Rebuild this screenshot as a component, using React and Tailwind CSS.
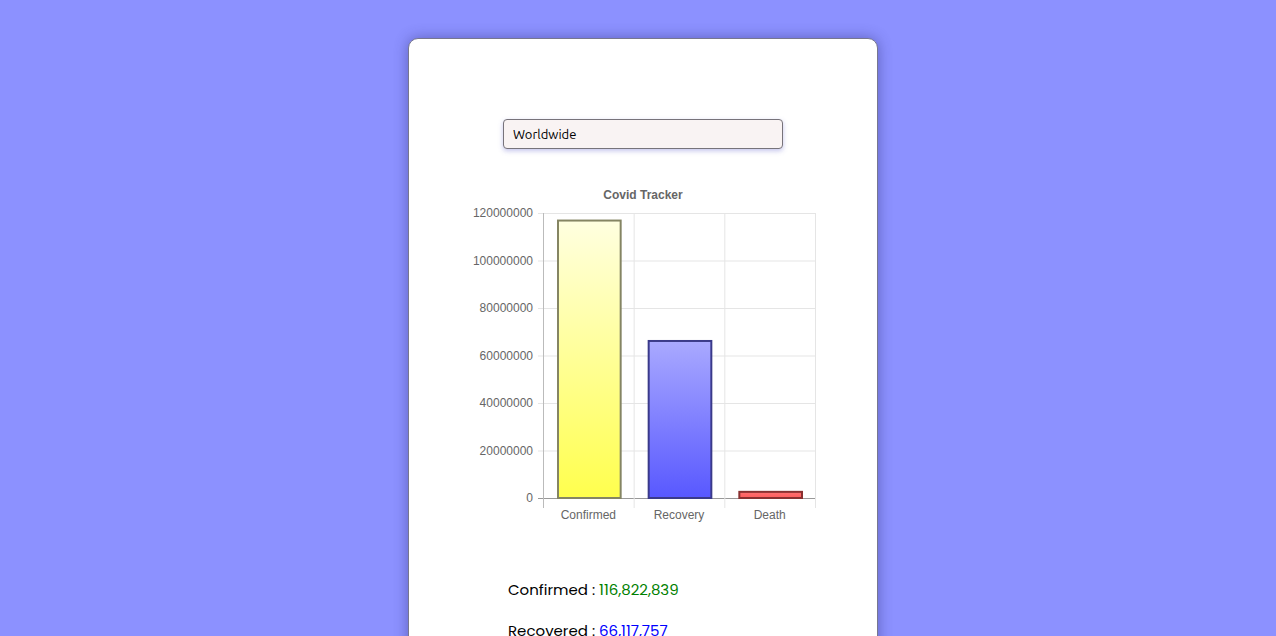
import { useState } from 'react'

const stats = { confirmed: 116822839, recovered: 66117757, deaths: 2592066 }

const yTicks = [0, 20000000, 40000000, 60000000, 80000000, 100000000, 120000000]

function Chart({ data }) {
  // plot area in svg coords
  const left = 134
  const right = 406
  const top = 33
  const bottom = 318
  const h = bottom - top
  const colW = (right - left) / 3
  const y = (v) => bottom - (v / 120000000) * h
  const bars = [
    { label: 'Confirmed', value: data.confirmed, grad: 'gY', stroke: '#858563' },
    { label: 'Recovery', value: data.recovered, grad: 'gB', stroke: '#3a3a8a' },
    { label: 'Death', value: data.deaths, grad: 'gR', stroke: '#8a3030' },
  ]
  return (
    <svg width="468" height="345" className="block" style={{ fontFamily: '"Liberation Sans", Arial, sans-serif' }}>
      <defs>
        <linearGradient id="gY" x1="0" y1="0" x2="0" y2="1">
          <stop offset="0" stopColor="#ffffe0" />
          <stop offset="1" stopColor="#ffff4d" />
        </linearGradient>
        <linearGradient id="gB" x1="0" y1="0" x2="0" y2="1">
          <stop offset="0" stopColor="#a9a9ff" />
          <stop offset="1" stopColor="#5858ff" />
        </linearGradient>
        <linearGradient id="gR" x1="0" y1="0" x2="0" y2="1">
          <stop offset="0" stopColor="#ff7070" />
          <stop offset="1" stopColor="#ff5c5c" />
        </linearGradient>
      </defs>
      <text x={234} y={19} textAnchor="middle" fontSize="12" fontWeight="bold" fill="#666">
        Covid Tracker
      </text>
      {yTicks.map((t) => (
        <g key={t}>
          <line x1={left - 5} x2={right} y1={y(t) + 0.5} y2={y(t) + 0.5} stroke={t === 0 ? '#999' : '#e5e5e5'} />
          <text x={left - 10} y={y(t) + 4} textAnchor="end" fontSize="12" fill="#666">
            {t}
          </text>
        </g>
      ))}
      {[0, 1, 2, 3].map((i) => (
        <line
          key={i}
          x1={left + i * colW + 0.5}
          x2={left + i * colW + 0.5}
          y1={top}
          y2={bottom + 10}
          stroke={i === 0 ? '#bbb' : '#e5e5e5'}
        />
      ))}
      {bars.map((b, i) => {
        const x = left + i * colW + 15
        const w = colW - 28
        const yt = y(b.value)
        return (
          <g key={b.label}>
            <rect x={x} y={yt} width={w} height={bottom - yt} fill={`url(#${b.grad})`} stroke={b.stroke} strokeWidth="2" />
            <text x={left + i * colW + colW / 2} y={bottom + 21} textAnchor="middle" fontSize="12" fill="#666">
              {b.label}
            </text>
          </g>
        )
      })}
    </svg>
  )
}

export default function App() {
  const [country, setCountry] = useState('Worldwide')

  return (
    <div className="h-[636px] overflow-hidden bg-[#8c91ff] pt-[38px] pl-[10px]">
      <div className="mx-auto w-[470px] h-[700px] rounded-[10px] bg-white border border-[#77778f] shadow-[0_0_14px_rgba(40,40,110,0.45)]">
        <div className="pt-[80px] flex justify-center">
          <input
            value={country}
            onChange={(e) => setCountry(e.target.value)}
            className="w-[280px] h-[30px] rounded-[4px] border border-[#77737a] bg-[#f9f3f3] px-[9px] text-[13px] text-black outline-none shadow-[0_2px_5px_rgba(90,90,200,0.35)]"
            style={{ fontFamily: 'Ubuntu, "Open Sans", "Noto Sans", sans-serif' }}
          />
        </div>
        <div className="mt-[31px]">
          <Chart data={stats} />
        </div>
        <div
          className="mt-[54px] pl-[99px] text-[15px] leading-[22px] text-black flex flex-col gap-[19px]"
          style={{ fontFamily: 'Poppins, "Noto Sans", sans-serif' }}
        >
          <p>
            Confirmed : <span className="text-[#008000]">{stats.confirmed.toLocaleString('en-US')}</span>
          </p>
          <p>
            Recovered : <span className="text-[#0000ff]">{stats.recovered.toLocaleString('en-US')}</span>
          </p>
        </div>
      </div>
    </div>
  )
}
